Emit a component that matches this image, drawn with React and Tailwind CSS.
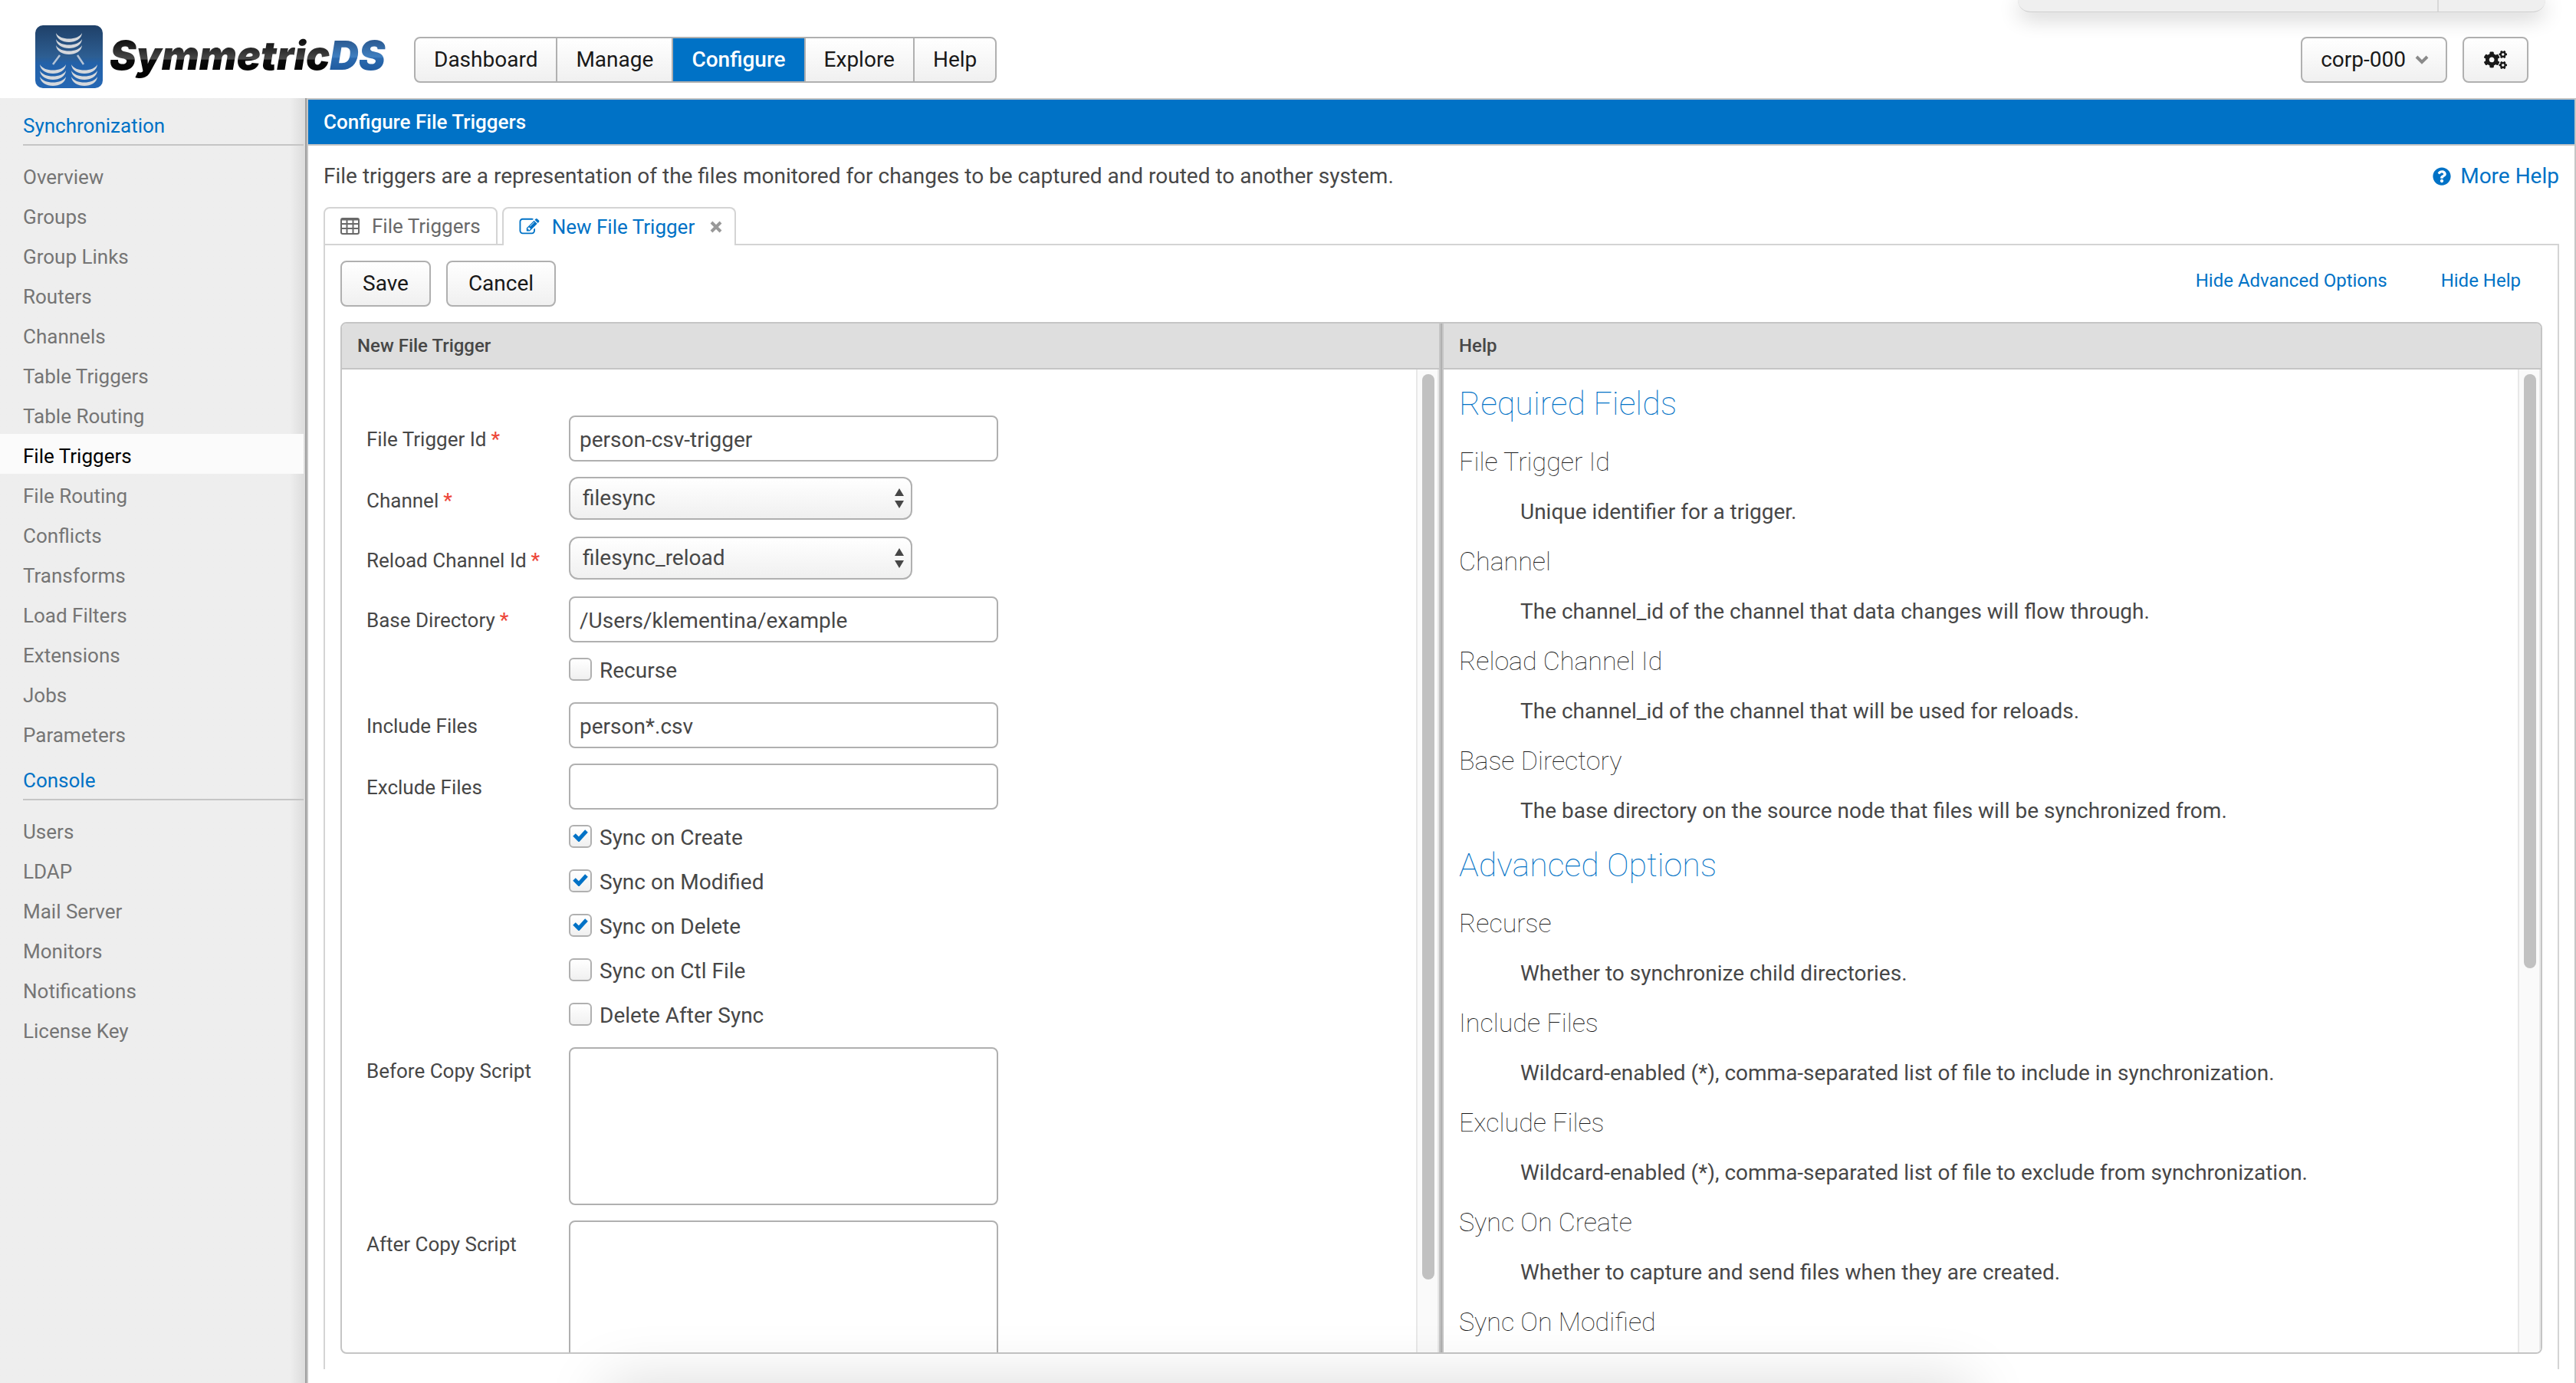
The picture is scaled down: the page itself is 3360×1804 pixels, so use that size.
import { useState } from 'react'
import { FaCogs, FaQuestionCircle } from 'react-icons/fa'

const NAV = ['Dashboard', 'Manage', 'Configure', 'Explore', 'Help']

const MENU = [
    {
        title: 'Synchronization',
        items: [
            'Overview', 'Groups', 'Group Links', 'Routers', 'Channels', 'Table Triggers', 'Table Routing',
            'File Triggers', 'File Routing', 'Conflicts', 'Transforms', 'Load Filters', 'Extensions', 'Jobs', 'Parameters',
        ],
    },
    {
        title: 'Console',
        items: ['Users', 'LDAP', 'Mail Server', 'Monitors', 'Notifications', 'License Key'],
    },
]

const HELP = [
    {
        title: 'Required Fields',
        entries: [
            ['File Trigger Id', 'Unique identifier for a trigger.'],
            ['Channel', 'The channel_id of the channel that data changes will flow through.'],
            ['Reload Channel Id', 'The channel_id of the channel that will be used for reloads.'],
            ['Base Directory', 'The base directory on the source node that files will be synchronized from.'],
        ],
    },
    {
        title: 'Advanced Options',
        entries: [
            ['Recurse', 'Whether to synchronize child directories.'],
            ['Include Files', 'Wildcard-enabled (*), comma-separated list of file to include in synchronization.'],
            ['Exclude Files', 'Wildcard-enabled (*), comma-separated list of file to exclude from synchronization.'],
            ['Sync On Create', 'Whether to capture and send files when they are created.'],
            ['Sync On Modified'],
        ],
    },
]

const BUTTON = 'h-[60px] rounded-lg border-2 border-[#b0b0b0] bg-linear-to-b from-white to-[#f0f0f0] text-[28px] text-[#191919]'
const FIELD = 'w-[560px] rounded-lg border-2 border-[#b0b0b0] bg-white px-3 pt-[2px] text-[28px] text-[#474747]'

// [x, y] of each signal arc: one stack on top, two below
const ARCS = [
    [43, 19], [43, 27], [43, 35],
    [22, 60], [22, 68], [22, 76],
    [63, 60], [63, 68], [63, 76],
]

const Logo = () => (
    <svg viewBox="0 0 490 96" className="h-24 w-[490px]" role="img" aria-label="SymmetricDS">
        <defs>
            <linearGradient id="tile" x1="0" y1="0" x2="0" y2="1">
                <stop offset="0" stopColor="#1f4068" />
                <stop offset="0.5" stopColor="#2d5e92" />
                <stop offset="0.6" stopColor="#2361a8" />
                <stop offset="1" stopColor="#2567b4" />
            </linearGradient>
            <linearGradient id="ink" gradientUnits="userSpaceOnUse" x1="0" y1="30" x2="0" y2="76">
                <stop offset="0" stopColor="#111111" />
                <stop offset="0.5" stopColor="#4a4a4a" />
                <stop offset="0.53" stopColor="#0a0a0a" />
                <stop offset="1" stopColor="#000000" />
            </linearGradient>
            <linearGradient id="blue" gradientUnits="userSpaceOnUse" x1="0" y1="30" x2="0" y2="70">
                <stop offset="0" stopColor="#2c5c94" />
                <stop offset="0.5" stopColor="#3f7fc0" />
                <stop offset="0.56" stopColor="#2a69ae" />
                <stop offset="1" stopColor="#1f5a9e" />
            </linearGradient>
        </defs>
        <rect x="16" y="9" width="88" height="82" rx="10" fill="url(#tile)" />
        <g fill="#d5d8dc">
            {ARCS.map(([x, y]) => (
                <path key={`${x}-${y}`} transform={`translate(${x} ${y})`} d="M0 0C1 16 33 16 34 0C29 10 5 10 0 0Z" />
            ))}
        </g>
        <path d="M48 48L39 60M71 48L79 60" stroke="#b5c4d6" strokeWidth="2.500" />
        <text x="113" y="67" fontFamily="Inter, sans-serif" fontSize="52" fontWeight="900" fontStyle="italic" fill="url(#ink)">
            Symmetric<tspan fill="url(#blue)">DS</tspan>
        </text>
    </svg>
)

const Header = () => (
    <header className="flex h-32 items-start justify-between bg-white pr-[62px]">
        <div className="flex items-start">
            <div className="w-[540px] pt-6 pl-[30px]"><Logo /></div>
            <nav className="mt-12 flex h-[60px] overflow-hidden rounded-lg border-2 border-[#b0b0b0] bg-linear-to-b from-white to-[#f0f0f0]">
                {NAV.map((item) => (
                    <button
                        key={item}
                        type="button"
                        className={`border-r-2 border-[#b0b0b0] px-6 text-[28px] last:border-r-0 ${item === 'Configure' ? 'bg-[#0072c6] font-medium text-white' : 'text-[#191919]'}`}
                    >
                        {item}
                    </button>
                ))}
            </nav>
        </div>
        <div className="mt-12 flex gap-5">
            <button type="button" className={`${BUTTON} flex items-center gap-3 pr-[22px] pl-6`}>
                corp-000
                <svg viewBox="0 0 18 12" className="h-3 w-[18px]" fill="none" stroke="#8a8a8a" strokeWidth="4">
                    <path d="M2 2L9 9L16 2" />
                </svg>
            </button>
            <button type="button" aria-label="Settings" className={`${BUTTON} flex items-center px-[26px]`}>
                <FaCogs className="size-[30px]" />
            </button>
        </div>
    </header>
)

const Sidebar = () => (
    <aside className="w-[400px] shrink-0 border-r-2 border-[#a0a0a0] bg-[#eeeeee] bg-linear-to-l from-[#dcdcdc] via-[#eeeeee] via-5% to-[#eeeeee] pr-[2px]">
        {MENU.map((group) => (
            <div key={group.title}>
                <h2 className="ml-[30px] flex h-[62px] items-center border-b-2 border-[#c5c5c5] pt-3 text-[26px] text-[#0072c6]">{group.title}</h2>
                <ul className="pt-3">
                    {group.items.map((item) => (
                        <li key={item}>
                            <a
                                href="#"
                                className={`flex h-[52px] items-center pt-[6px] pl-[30px] text-[26px] ${item === 'File Triggers' ? 'bg-[#fbfbfb] text-black' : 'text-[#757575]'}`}
                            >
                                {item}
                            </a>
                        </li>
                    ))}
                </ul>
            </div>
        ))}
    </aside>
)

const Tabs = () => (
    <div className="relative z-10 -mb-[2px] flex h-[50px] gap-[6px] text-[26px]">
        <button type="button" className="flex items-center gap-4 rounded-t-lg border-2 border-[#d4d4d4] px-5 text-[#696969]">
            <svg viewBox="0 0 25 22" className="h-[22px] w-[25px]" fill="none" stroke="currentColor" strokeWidth="2">
                <rect x="1" y="1" width="23" height="20" rx="2" />
                <path d="M1 2.5H24M1 8H24M1 14H24M8.500 2V21M16.500 2V21" />
            </svg>
            File Triggers
        </button>
        <div className="flex items-center rounded-t-lg border-2 border-b-0 border-[#d4d4d4] bg-white pr-4 pl-5 text-[#0072c6]">
            <button type="button" className="flex items-center gap-4">
                <svg viewBox="0 0 1792 1792" className="h-[26px] w-[27px]" fill="currentColor">
                    <path d="M888 1184l116-116-152-152-116 116v56h96v96h56zm440-720q-16-16-33 1l-350 350q-17 17-1 33t33-1l350-350q17-17 1-33zm80 594v190q0 119-84.500 203.500t-203.500 84.500h-832q-119 0-203.500-84.500t-84.500-203.500v-832q0-119 84.500-203.500t203.500-84.500h832q63 0 117 25 15 7 18 23 3 17-9 29l-49 49q-14 14-32 8-23-6-45-6h-832q-66 0-113 47t-47 113v832q0 66 47 113t113 47h832q66 0 113-47t47-113v-126q0-13 9-22l64-64q15-15 35-7t20 29zm-96-738l288 288-672 672h-288v-288zm444 132l-92 92-288-288 92-92q28-28 68-28t68 28l152 152q28 28 28 68t-28 68z" />
                </svg>
                New File Trigger
            </button>
            <button type="button" aria-label="Close tab" className="ml-5">
                <svg viewBox="0 0 16 16" className="size-4" stroke="#999999" strokeWidth="4">
                    <path d="M2 2L14 14M14 2L2 14" />
                </svg>
            </button>
        </div>
    </div>
)

const Row = ({ label, id, required, children }) => (
    <div className="flex">
        <label htmlFor={id} className="w-[264px] shrink-0 pt-4 text-[26px] leading-[30px]">
            {label}
            {required && <span className="ml-[6px] font-medium text-[#ed473b]">*</span>}
        </label>
        {children}
    </div>
)

const SelectField = ({ id, value }) => (
    <div className="relative h-[58px]">
        <select
            id={id}
            defaultValue={value}
            className="h-14 w-[448px] appearance-none rounded-xl border-2 border-[#b0b0b0] bg-linear-to-b from-white to-[#f0f0f0] px-4 text-[28px]"
        >
            <option>{value}</option>
        </select>
        <svg viewBox="0 0 12 26" className="pointer-events-none absolute top-[15px] right-[11px] h-[26px] w-3" fill="#474747">
            <path d="M6 0L12 10H0ZM6 26L0 16H12Z" />
        </svg>
    </div>
)

const Check = ({ label, on = false }) => {
    const [checked, setChecked] = useState(on)
    return (
        <label className="ml-[264px] flex h-[38px] items-start gap-[10px] text-[28px] leading-[34px]">
            <span className="relative">
                <input
                    type="checkbox"
                    checked={checked}
                    onChange={() => setChecked(!checked)}
                    className="block size-[30px] appearance-none rounded-md border-2 border-[#b0b0b0] bg-linear-to-b from-white to-[#f0f0f0]"
                />
                {checked && (
                    <svg viewBox="0 0 20 16" className="pointer-events-none absolute top-[6px] left-[5px] h-4 w-5" fill="none" stroke="#0072c6" strokeWidth="5">
                        <path d="M2 7L8 13L18 2" />
                    </svg>
                )}
            </span>
            {label}
        </label>
    )
}

// thumb is the share of the track that the content shows
const Scroller = ({ thumb }) => (
    <div className="w-[30px] shrink-0 border-x-2 border-[#e8e8e8] bg-[#fafafa] py-[6px] pl-[6px]">
        <div className="w-4 rounded-full bg-[#c1c1c1]" style={{ height: thumb }} />
    </div>
)

const Panel = ({ title, thumb, children }) => (
    <section className="flex min-w-0 flex-1 flex-col">
        <h3 className="flex h-[60px] shrink-0 items-center border-b-2 border-[#c5c5c5] bg-[#dedede] px-5 text-[24px] font-medium">{title}</h3>
        <div className="flex min-h-0 flex-1">
            <div className="min-w-0 flex-1 overflow-hidden">{children}</div>
            <Scroller thumb={thumb} />
        </div>
    </section>
)

const TriggerForm = () => (
    <form className="flex flex-col gap-5 pt-[60px] pl-8">
        <Row label="File Trigger Id" id="trigger-id" required>
            <input id="trigger-id" defaultValue="person-csv-trigger" className={`${FIELD} h-[60px]`} />
        </Row>
        <Row label="Channel" id="channel" required><SelectField id="channel" value="filesync" /></Row>
        <Row label="Reload Channel Id" id="reload" required><SelectField id="reload" value="filesync_reload" /></Row>
        <Row label="Base Directory" id="base-dir" required>
            <input id="base-dir" defaultValue="/Users/klementina/example" className={`${FIELD} h-[60px]`} />
        </Row>
        <Check label="Recurse" />
        <Row label="Include Files" id="include">
            <input id="include" defaultValue="person*.csv" className={`${FIELD} h-[60px]`} />
        </Row>
        <Row label="Exclude Files" id="exclude">
            <input id="exclude" className={`${FIELD} h-[60px]`} />
        </Row>
        <Check label="Sync on Create" on />
        <Check label="Sync on Modified" on />
        <Check label="Sync on Delete" on />
        <Check label="Sync on Ctl File" />
        <Check label="Delete After Sync" />
        <Row label="Before Copy Script" id="before">
            <textarea id="before" className={`${FIELD} h-[206px] resize-none`} />
        </Row>
        <Row label="After Copy Script" id="after">
            <textarea id="after" className={`${FIELD} h-[206px] resize-none`} />
        </Row>
    </form>
)

const HelpText = () => (
    <div className="px-5 pt-[14px]">
        {HELP.map((group) => (
            <div key={group.title} className="pb-2">
                <h2 className="h-[74px] pt-1 text-[43px] leading-[52px] font-thin text-[#0072c6]">{group.title}</h2>
                <dl>
                    {group.entries.map(([term, text]) => (
                        <div key={term} className="h-[130px]">
                            <dt className="pt-3 text-[34px] leading-10 font-thin text-[#191919]">{term}</dt>
                            {text && <dd className="pt-7 pl-20 text-[28px] leading-9">{text}</dd>}
                        </div>
                    ))}
                </dl>
            </div>
        ))}
    </div>
)

const App = () => (
    <div className="relative flex h-screen flex-col overflow-hidden bg-white font-[Roboto,sans-serif] text-[#474747]">
        <Header />
        <div className="flex min-h-0 flex-1">
            <Sidebar />
            <main className="flex min-w-0 flex-1 flex-col border-x-2 border-t-2 border-[#c5c5c5]">
                <h1 className="flex h-[60px] shrink-0 items-center border-b-2 border-[#c5c5c5] bg-[#0072c6] px-5 text-[26px] font-medium text-white">
                    Configure File Triggers
                </h1>
                <div className="flex min-h-0 flex-1 flex-col px-5 pb-[18px]">
                    <div className="flex h-20 shrink-0 items-center justify-between text-[28px]">
                        <p>File triggers are a representation of the files monitored for changes to be captured and routed to another system.</p>
                        <a href="#" className="flex items-center gap-3 text-[#0072c6]">
                            <FaQuestionCircle className="size-6" />
                            More Help
                        </a>
                    </div>
                    <Tabs />
                    <div className="flex min-h-0 flex-1 flex-col border-2 border-b-0 border-[#d4d4d4] px-5 pt-5 pb-5">
                        <div className="flex shrink-0 items-start justify-between pb-5">
                            <div className="flex gap-5">
                                <button type="button" className={`${BUTTON} px-[27px]`}>Save</button>
                                <button type="button" className={`${BUTTON} px-[27px]`}>Cancel</button>
                            </div>
                            <div className="flex gap-[70px] pt-2 pr-[28px] text-[24px] text-[#0072c6]">
                                <a href="#">Hide Advanced Options</a>
                                <a href="#">Hide Help</a>
                            </div>
                        </div>
                        <div className="flex min-h-0 flex-1 overflow-hidden rounded-lg border-2 border-[#c5c5c5]">
                            <Panel title="New File Trigger" thumb="93%"><TriggerForm /></Panel>
                            <div className="w-[6px] shrink-0 border-x-2 border-[#c5c5c5] bg-[#b0b0b0]" />
                            <Panel title="Help" thumb="61%"><HelpText /></Panel>
                        </div>
                    </div>
                </div>
            </main>
        </div>

        {/* sheet that hangs over the top edge */}
        <div className="absolute top-0 right-10 flex h-4 w-[688px] justify-end rounded-b-2xl border-b border-[#d0d0d0] bg-[#efefef] shadow-[0_6px_28px_rgba(0,0,0,0.24)]">
            <div className="w-[141px] border-l-2 border-[#d8d8d8]" />
        </div>
        {/* shadow of the bar below the bottom edge */}
        <div className="absolute top-full right-[790px] left-[790px] h-20 shadow-[0_0_80px_rgba(0,0,0,0.15)]" />
    </div>
)

export default App
